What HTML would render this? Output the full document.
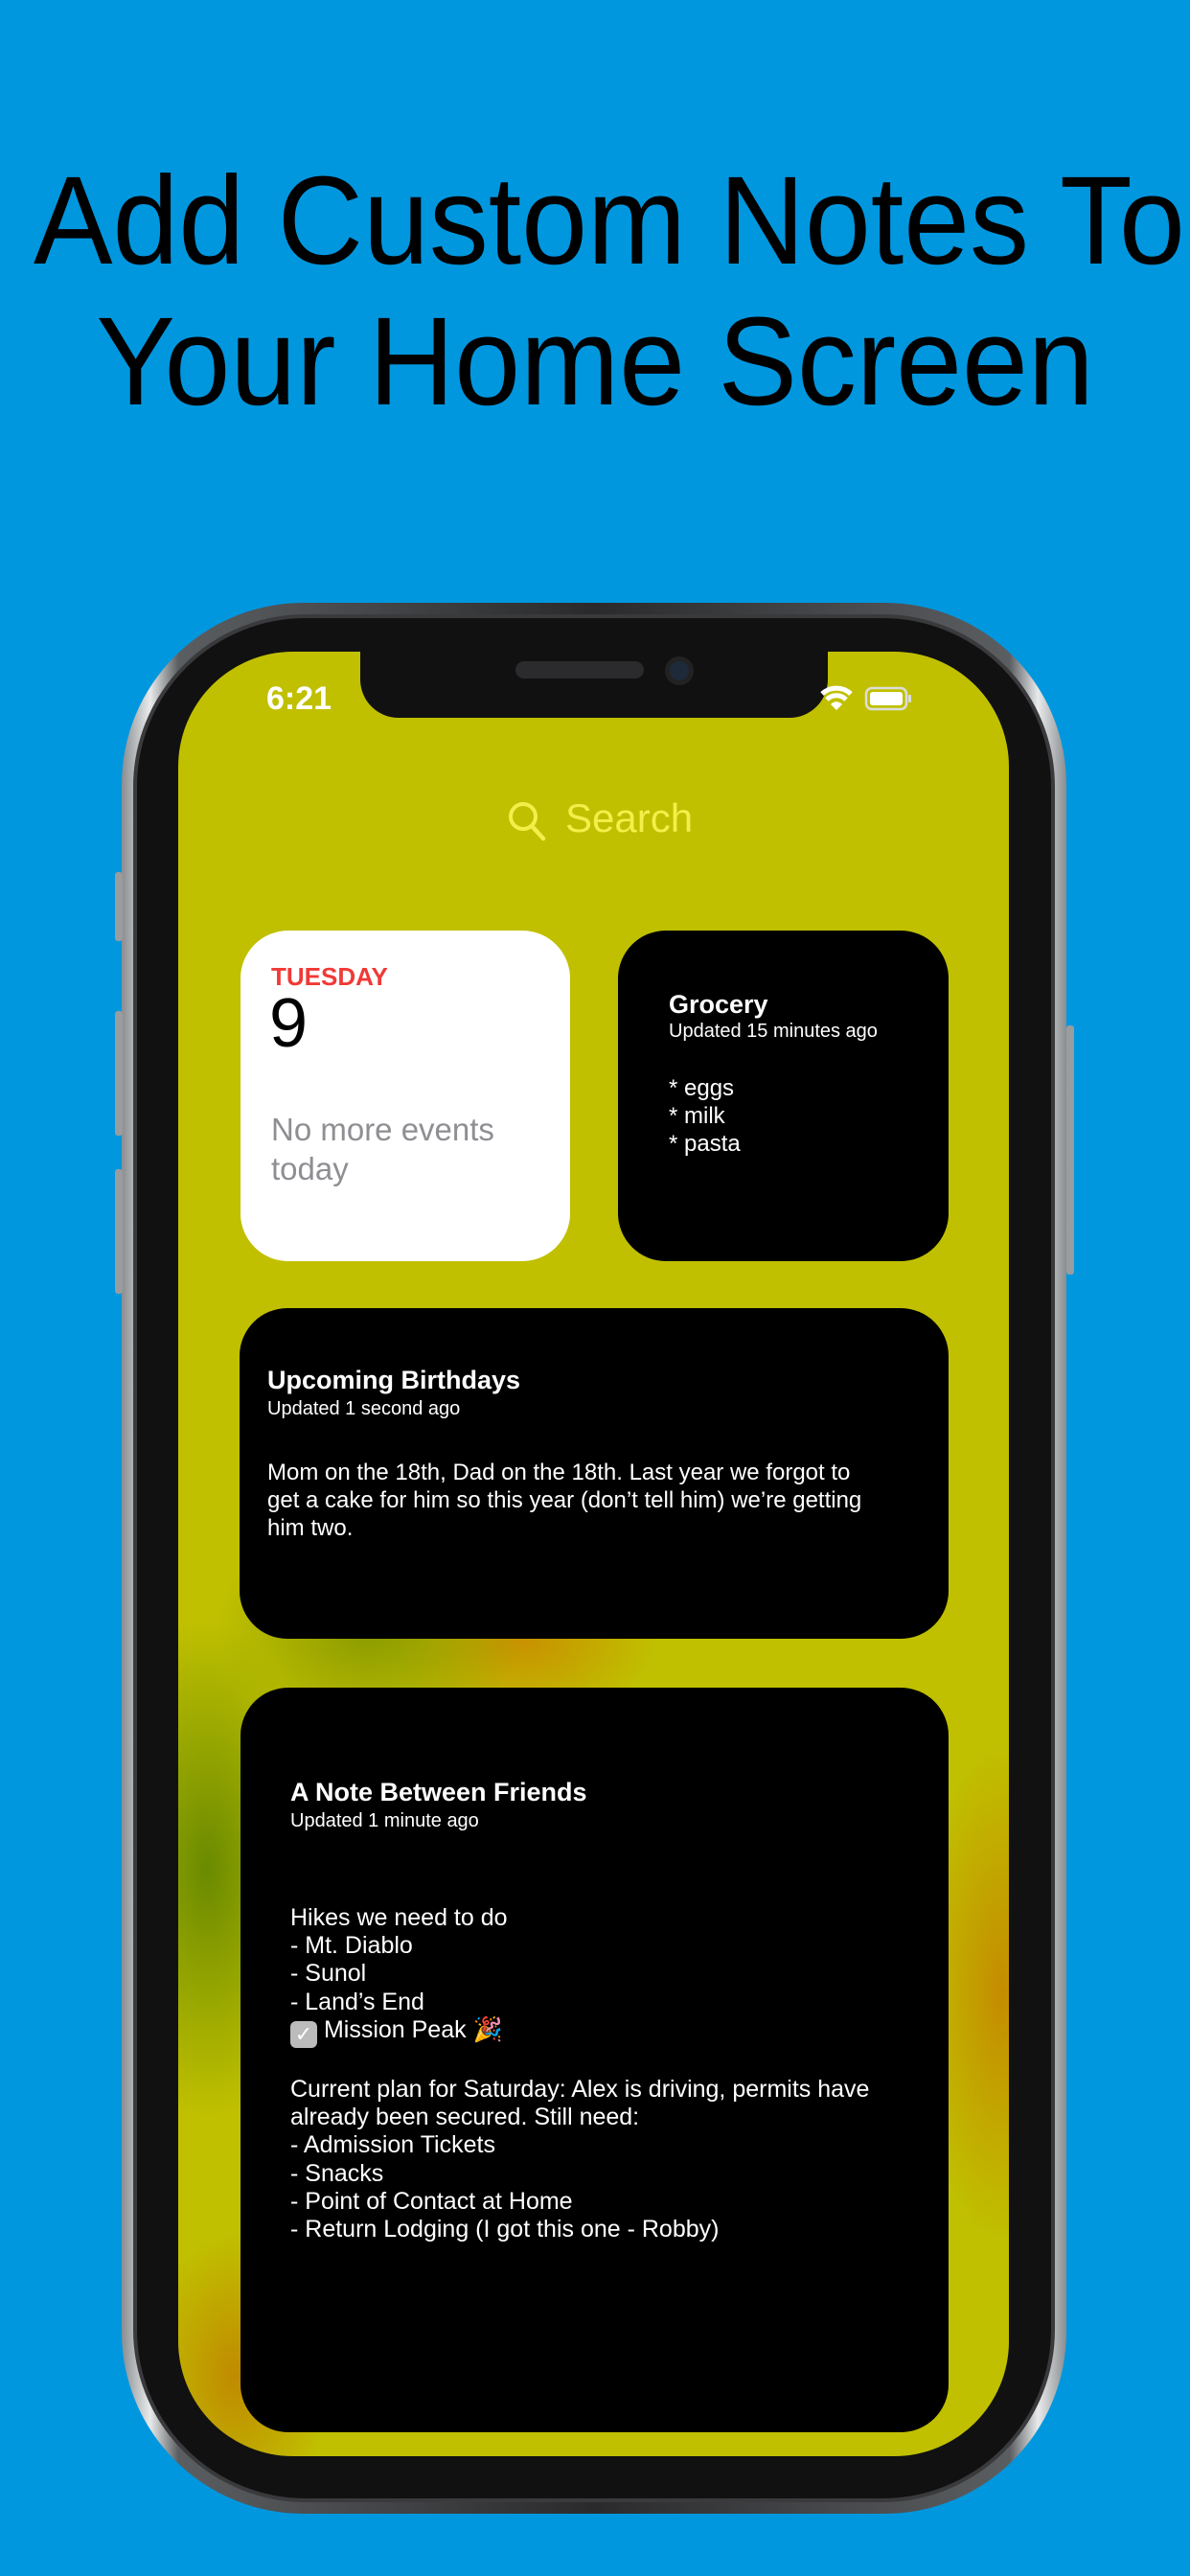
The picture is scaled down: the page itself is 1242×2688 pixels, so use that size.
<!DOCTYPE html>
<html><head><meta charset="utf-8">
<style>
*{margin:0;padding:0;box-sizing:border-box}
body{width:1242px;height:2688px;background:#0097df;position:relative;overflow:hidden;font-family:"Liberation Sans","DejaVu Sans",sans-serif}
.t{position:absolute;left:0;width:1242px;text-align:center;font-size:131px;line-height:1;color:#000;white-space:nowrap}
.t span{display:inline-block;transform:scaleX(0.945);transform-origin:center}
.phone{position:absolute;left:127px;top:629px;width:986px;height:1994px;border-radius:190px;background:linear-gradient(90deg,#8a8d90,#e8eaeb 3%,#5b5e61 6%,#2a2a2c 50%,#5b5e61 94%,#e8eaeb 97%,#8a8d90);}
.bez{position:absolute;left:12px;top:12px;right:12px;bottom:12px;border-radius:180px;background:#111112;border:4px solid #3a3a3c}
.btn{position:absolute;background:#9a9c9e;border-radius:3px;width:8px}
.screen{position:absolute;left:186px;top:680px;width:867px;height:1883px;border-radius:120px;overflow:hidden;
background:
radial-gradient(ellipse 120px 260px at 30px 1270px,#6a8a00 0%,rgba(106,138,0,0) 100%),
radial-gradient(ellipse 160px 120px at 200px 1020px,#8a9a00 0%,rgba(138,154,0,0) 100%),
radial-gradient(ellipse 140px 90px at 360px 1030px,#c89000 0%,rgba(200,144,0,0) 100%),
radial-gradient(ellipse 90px 260px at 860px 1400px,#c48c00 0%,rgba(196,140,0,0) 100%),
radial-gradient(ellipse 100px 150px at 60px 1800px,#c08a00 0%,rgba(192,138,0,0) 100%),
#c0c000}
.notch{position:absolute;left:190px;top:-10px;width:488px;height:79px;background:#111;border-radius:0 0 40px 40px}
.w{position:absolute;border-radius:50px;background:#000;color:#fff}
.abs{position:absolute;white-space:nowrap}
</style></head><body>
<div class="t" style="top:164px"><span>Add Custom Notes To</span></div>
<div class="t" style="top:311px"><span>Your Home Screen</span></div>

<div class="phone"><div class="bez"></div></div>
<div class="btn" style="left:120px;top:910px;height:72px"></div>
<div class="btn" style="left:120px;top:1055px;height:130px"></div>
<div class="btn" style="left:120px;top:1220px;height:130px"></div>
<div class="btn" style="left:1113px;top:1070px;height:260px"></div>

<div class="screen">
  <div class="notch">
    <div style="position:absolute;left:162px;top:20px;width:134px;height:18px;border-radius:9px;background:#2b2b2d"></div>
    <div style="position:absolute;left:318px;top:15px;width:30px;height:30px;border-radius:50%;background:#1e2a3a;border:5px solid #222"></div>
  </div>
  <div class="abs" style="left:92px;top:30px;font-size:34px;color:#fff;font-weight:bold">6:21</div>
  <svg class="abs" style="left:668px;top:34px" width="100" height="34" viewBox="0 0 100 34">
    <path d="M4 10 A22 22 0 0 1 34 10" stroke="#fff" stroke-width="5" fill="none"/>
    <path d="M9 16 A14 14 0 0 1 29 16" stroke="#fff" stroke-width="5" fill="none"/>
    <path d="M19 27 L13 21 A8 8 0 0 1 25 21 Z" fill="#fff"/>
    <rect x="50" y="4" width="42" height="22" rx="6" fill="none" stroke="#ddd" stroke-width="2.5"/>
    <rect x="54" y="8" width="34" height="14" rx="3" fill="#fff"/>
    <rect x="94" y="11" width="3" height="8" rx="1" fill="#ddd"/>
  </svg>
  <svg class="abs" style="left:344px;top:156px" width="40" height="42" viewBox="0 0 40 42"><circle cx="16" cy="16" r="13" stroke="#f3ef4a" stroke-width="4" fill="none"/><path d="M26 27 L37 39" stroke="#f3ef4a" stroke-width="4.5" stroke-linecap="round"/></svg>
  <div class="abs" style="left:404px;top:150px;font-size:42px;color:#f3ef4a;font-weight:500">Search</div>

  <div class="w" style="left:65px;top:291px;width:344px;height:345px;background:#fff">
    <div class="abs" style="left:32px;top:33px;font-size:26px;font-weight:bold;color:#f03a37">TUESDAY</div>
    <div class="abs" style="left:30px;top:56px;font-size:72px;color:#000">9</div>
    <div class="abs" style="left:32px;top:187px;font-size:33px;color:#8e8e93;line-height:41px">No more events<br>today</div>
  </div>
  <div class="w" style="left:459px;top:291px;width:345px;height:345px">
    <div class="abs" style="left:53px;top:62px;font-size:27px;font-weight:bold">Grocery</div>
    <div class="abs" style="left:53px;top:94px;font-size:20px">Updated 15 minutes ago</div>
    <div class="abs" style="left:53px;top:150px;font-size:24px;line-height:29px">* eggs<br>* milk<br>* pasta</div>
  </div>
  <div class="w" style="left:64px;top:685px;width:740px;height:345px">
    <div class="abs" style="left:29px;top:60px;font-size:27px;font-weight:bold">Upcoming Birthdays</div>
    <div class="abs" style="left:29px;top:94px;font-size:20px">Updated 1 second ago</div>
    <div class="abs" style="left:29px;top:157px;font-size:24px;line-height:29px">Mom on the 18th, Dad on the 18th. Last year we forgot to<br>get a cake for him so this year (don’t tell him) we’re getting<br>him two.</div>
  </div>
  <div class="w" style="left:65px;top:1081px;width:739px;height:777px">
    <div class="abs" style="left:52px;top:94px;font-size:27px;font-weight:bold">A Note Between Friends</div>
    <div class="abs" style="left:52px;top:128px;font-size:20px">Updated 1 minute ago</div>
    <div class="abs" style="left:52px;top:226px;font-size:25px;line-height:29.2px">Hikes we need to do<br>- Mt. Diablo<br>- Sunol<br>- Land’s End<br><span style="display:inline-block;width:28px;height:28px;border-radius:6px;background:#bbb;color:#fff;text-align:center;line-height:28px;font-size:22px;vertical-align:-4px">✓</span> Mission Peak 🎉<br><br>Current plan for Saturday: Alex is driving, permits have<br>already been secured. Still need:<br>- Admission Tickets<br>- Snacks<br>- Point of Contact at Home<br>- Return Lodging (I got this one - Robby)</div>
  </div>
</div>
</body></html>
